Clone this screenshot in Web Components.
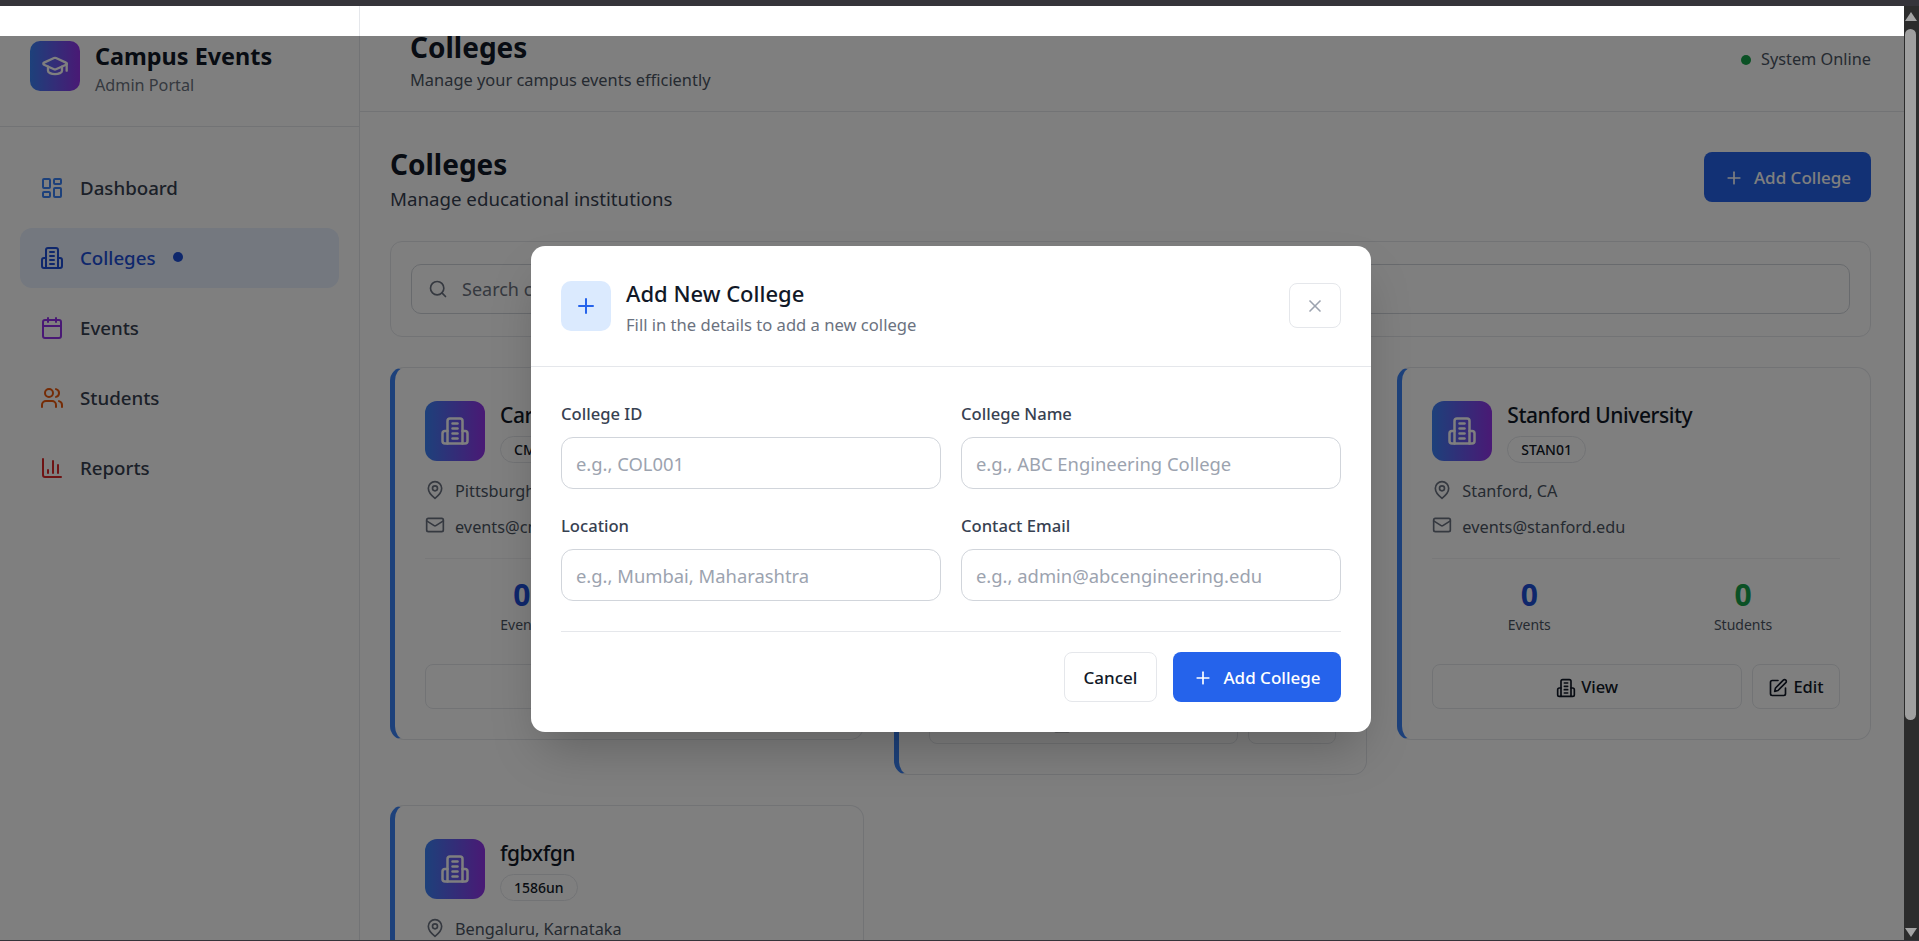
<!DOCTYPE html>
<html lang="en">
<head>
<meta charset="utf-8">
<title>Campus Events</title>
<style>
  html, body { margin: 0; height: 100%; overflow: hidden; }
  body { font-family: "Noto Sans", sans-serif; line-height: 1.6; color: #111827; background: #333; }
</style>
</head>
<body>
<app-shell>
  <side-bar slot="sidebar">
    <nav-item icon="dashboard" color="#3b82f6">Dashboard</nav-item>
    <nav-item icon="building" color="#1d4ed8" active>Colleges</nav-item>
    <nav-item icon="calendar" color="#9333ea">Events</nav-item>
    <nav-item icon="users" color="#ea580c">Students</nav-item>
    <nav-item icon="chart" color="#dc2626">Reports</nav-item>
  </side-bar>
  <top-bar slot="main"></top-bar>
  <colleges-page slot="main">
    <college-card name="Carnegie Mellon University" code="CMU" place="Pittsburgh, PA" email="events@cmu.edu"></college-card>
    <college-card name="Massachusetts Institute of Technology" code="MIT" place="Cambridge, MA" email="events@mit.edu"></college-card>
    <college-card name="Stanford University" code="STAN01" place="Stanford, CA" email="events@stanford.edu"></college-card>
    <college-card name="fgbxfgn" code="1586un" place="Bengaluru, Karnataka" email="admin@fgbxfgn.edu"></college-card>
  </colleges-page>
  <add-college-modal slot="modal"></add-college-modal>
</app-shell>

<script>
const ICONS = {
    dashboard: '<rect x="3" y="3" width="7" height="9" rx="1"/><rect x="14" y="3" width="7" height="5" rx="1"/><rect x="14" y="12" width="7" height="9" rx="1"/><rect x="3" y="16" width="7" height="5" rx="1"/>',
    building: '<path d="M6 22V4a2 2 0 0 1 2-2h8a2 2 0 0 1 2 2v18Z"/><path d="M6 12H4a2 2 0 0 0-2 2v6a2 2 0 0 0 2 2h2"/><path d="M18 12h2a2 2 0 0 1 2 2v6a2 2 0 0 1-2 2h-2"/><path d="M10 6h4"/><path d="M10 10h4"/><path d="M10 14h4"/><path d="M10 18h4"/>',
    calendar: '<path d="M8 2v4"/><path d="M16 2v4"/><rect x="3" y="4" width="18" height="18" rx="2"/><path d="M3 10h18"/>',
    users: '<path d="M16 21v-2a4 4 0 0 0-4-4H6a4 4 0 0 0-4 4v2"/><circle cx="9" cy="7" r="4"/><path d="M22 21v-2a4 4 0 0 0-3-3.87"/><path d="M16 3.13a4 4 0 0 1 0 7.75"/>',
    chart: '<path d="M3 3v16a2 2 0 0 0 2 2h16"/><path d="M18 17V9"/><path d="M13 17V5"/><path d="M8 17v-3"/>',
    cap: '<path d="M21.42 10.92a1 1 0 0 0-.02-1.84L12.83 5.18a2 2 0 0 0-1.66 0L2.6 9.08a1 1 0 0 0 0 1.83l8.57 3.91a2 2 0 0 0 1.66 0z"/><path d="M22 10v6"/><path d="M6 12.5V16a6 3 0 0 0 12 0v-3.5"/>',
    pin: '<path d="M20 10c0 6-8 12-8 12s-8-6-8-12a8 8 0 0 1 16 0Z"/><circle cx="12" cy="10" r="3"/>',
    mail: '<rect x="2" y="4" width="20" height="16" rx="2"/><path d="m22 7-8.97 5.7a1.94 1.94 0 0 1-2.06 0L2 7"/>',
    edit: '<path d="M12 3H5a2 2 0 0 0-2 2v14a2 2 0 0 0 2 2h14a2 2 0 0 0 2-2v-7"/><path d="M18.375 2.625a2.121 2.121 0 1 1 3 3L12 15l-4 1 1-4Z"/>',
    search: '<circle cx="11" cy="11" r="8"/><path d="m21 21-4.3-4.3"/>',
    plus: '<path d="M5 12h14"/><path d="M12 5v14"/>',
    close: '<path d="M18 6 6 18"/><path d="m6 6 12 12"/>'
};

class AppIcon extends HTMLElement {
    constructor(){
        super();
        this.attachShadow({mode: "open"});
    }
    connectedCallback(){
        const size = this.getAttribute('size') || 24;
        const stroke = this.getAttribute('stroke') || 2;
        this.shadowRoot.innerHTML = `
            <style>
                :host { display: inline-flex; flex: none; color: ${this.getAttribute('color') || 'currentColor'}; }
            </style>
            <svg width="${size}" height="${size}" viewBox="0 0 24 24" fill="none" stroke="currentColor"
                stroke-width="${stroke}" stroke-linecap="round" stroke-linejoin="round">${ICONS[this.getAttribute('name')]}</svg>
        `;
    }
}

class AppShell extends HTMLElement {
    constructor(){
        super();
        this.attachShadow({mode: "open"});
    }
    connectedCallback(){
        this.shadowRoot.innerHTML = `
            <style>
                :host { display: grid; grid-template-columns: minmax(0, 1fr) 15px; grid-template-rows: 6px minmax(0, 1fr) 1px; height: 941px; background: #35343a; }
                .bar { grid-column: 1 / 3; background: #35343a; }
                .view { position: relative; display: flex; overflow: hidden; background: #fff; }
                .main { flex: 1; min-width: 0; display: block; }
                .overlay { position: absolute; inset: 30px 0 0 0; padding: 1px 2px 0 0; background: rgba(0,0,0,.5); display: flex; align-items: center; justify-content: center; }
                .track { background: #2c2c2c; display: flex; flex-direction: column; align-items: center; padding: 6px 4px 3px 2px; box-sizing: border-box; }
                .up, .down { width: 0; height: 0; border: 6px solid transparent; border-top: 0; border-bottom: 9px solid #a3a3a3; flex: none; }
                .down { transform: rotate(180deg); margin-top: auto; }
                .thumb { width: 11px; height: 691px; margin-top: 8px; background: #9f9f9f; border-radius: 6px; flex: none; }
            </style>
            <div class="bar"></div>
            <div class="view">
                <slot name="sidebar"></slot>
                <div class="main"><slot name="main"></slot></div>
                <div class="overlay"><slot name="modal"></slot></div>
            </div>
            <div class="track"><div class="up"></div><div class="thumb"></div><div class="down"></div></div>
            <div class="bar"></div>
        `;
    }
}

class SideBar extends HTMLElement {
    constructor(){
        super();
        this.attachShadow({mode: "open"});
    }
    connectedCallback(){
        this.shadowRoot.innerHTML = `
            <style>
                :host { display: block; width: 360px; flex: none; box-sizing: border-box; border-right: 1px solid #e5e7eb; background: #fff; }
                header { display: flex; align-items: center; gap: 15px; height: 120px; padding: 0 30px; border-bottom: 1px solid #e5e7eb; }
                .logo { width: 50px; height: 50px; border-radius: 10px; background: linear-gradient(90deg, #3b82f6, #9333ea); display: flex; align-items: center; justify-content: center; color: #fff; }
                .text { margin-top: 8px; }
                h1 { margin: 0; font-size: 23.4px; font-weight: 700; line-height: 30px; color: #111827; }
                p { margin: 0; font-size: 16.2px; line-height: 29px; color: #6b7280; }
                nav { display: flex; flex-direction: column; gap: 10px; padding: 31px 20px; }
            </style>
            <header>
                <div class="logo"><app-icon name="cap" size="28"></app-icon></div>
                <div class="text"><h1>Campus Events</h1><p>Admin Portal</p></div>
            </header>
            <nav><slot></slot></nav>
        `;
    }
}

class NavItem extends HTMLElement {
    constructor(){
        super();
        this.attachShadow({mode: "open"});
    }
    connectedCallback(){
        const active = this.hasAttribute('active');
        this.shadowRoot.innerHTML = `
            <style>
                :host { display: flex; align-items: center; gap: 16px; height: 60px; padding: 0 20px; border-radius: 12px; font-size: 18.7px; font-weight: 500; color: #374151; }
                :host([active]) { background: #e8f0fe; color: #1d4ed8; }
                i { width: 10px; height: 10px; border-radius: 50%; background: #1d4ed8; margin: -2px 0 0 1px; }
            </style>
            <app-icon name="${this.getAttribute('icon')}" color="${this.getAttribute('color')}" size="24"></app-icon>
            <slot></slot>
            ${active ? '<i></i>' : ''}
        `;
    }
}

class TopBar extends HTMLElement {
    constructor(){
        super();
        this.attachShadow({mode: "open"});
    }
    connectedCallback(){
        this.shadowRoot.innerHTML = `
            <style>
                :host { display: flex; align-items: center; justify-content: space-between; height: 106px; box-sizing: border-box; padding: 0 33px 0 50px; border-bottom: 1px solid #e5e7eb; background: #fff; }
                .title { margin-top: 2px; }
                h2 { margin: 0; font-size: 28px; font-weight: 700; line-height: 40px; }
                p { margin: 0; font-size: 16.4px; line-height: 26px; color: #4b5563; }
                .status { display: flex; align-items: center; gap: 10px; margin-top: 2px; font-size: 16.3px; color: #4b5563; }
                i { width: 10px; height: 10px; border-radius: 50%; background: #16a34a; }
            </style>
            <div class="title"><h2>Colleges</h2><p>Manage your campus events efficiently</p></div>
            <div class="status"><i></i>System Online</div>
        `;
    }
}

class CollegesPage extends HTMLElement {
    constructor(){
        super();
        this.attachShadow({mode: "open"});
    }
    connectedCallback(){
        this.shadowRoot.innerHTML = `
            <style>
                :host { display: block; padding: 28px 33px 0 30px; background: #fff; }
                .head { display: flex; justify-content: space-between; align-items: flex-start; margin-bottom: 28px; }
                h2 { margin: 0; font-size: 28px; font-weight: 700; line-height: 48px; }
                p { margin: -4px 0 0; font-size: 18.7px; line-height: 29px; color: #374151; }
                ui-button { margin-top: 12px; }
                .search { border: 1px solid #e5e7eb; border-radius: 12px; padding: 22px 20px; margin-bottom: 30px; }
                .box { display: flex; align-items: center; gap: 14px; height: 50px; box-sizing: border-box; padding: 0 16px; border: 1px solid #d1d5db; border-radius: 10px; color: #6b7280; font-size: 18px; }
                .grid { display: grid; grid-template-columns: repeat(3, 1fr); gap: 30px; align-items: start; }
            </style>
            <div class="head">
                <div><h2>Colleges</h2><p>Manage educational institutions</p></div>
                <ui-button primary icon="plus" width="167px">Add College</ui-button>
            </div>
            <div class="search"><div class="box"><app-icon name="search" size="20" color="#6b7280"></app-icon>Search colleges</div></div>
            <div class="grid"><slot></slot></div>
        `;
    }
}

class CollegeCard extends HTMLElement {
    constructor(){
        super();
        this.attachShadow({mode: "open"});
    }
    connectedCallback(){
        const get = (name) => this.getAttribute(name);
        this.shadowRoot.innerHTML = `
            <style>
                :host { display: block; box-sizing: border-box; padding: 30px; background: #fff; border: 1px solid #e5e7eb; border-left: 5px solid #3b82f6; border-radius: 14px; }
                header { display: flex; align-items: center; gap: 15px; margin-bottom: 16px; }
                .logo { width: 60px; height: 60px; flex: none; border-radius: 12px; background: linear-gradient(90deg, #3b82f6, #9333ea); display: flex; align-items: center; justify-content: center; color: #fff; }
                h3 { margin: 0; font-size: 21px; font-weight: 500; line-height: 35px; letter-spacing: -.45px; color: #111827; }
                .code { display: block; width: max-content; height: 27px; box-sizing: border-box; line-height: 25px; margin-top: 3px; padding: 0 13px; border: 1px solid #e5e7eb; border-radius: 14px; font-size: 14px; font-weight: 500; color: #111827; }
                .rows { display: flex; flex-direction: column; gap: 10px; }
                .row { display: flex; align-items: center; gap: 10px; font-size: 16.3px; line-height: 25.6px; color: #4b5563; }
                .row app-icon { margin-top: -4px; color: #6b7280; }
                .stats { display: grid; grid-template-columns: 1fr 1fr; gap: 20px; margin-top: 18px; padding-top: 18px; border-top: 1px solid #f0f1f3; text-align: center; }
                b { display: block; font-size: 30px; font-weight: 700; line-height: 36px; }
                span.label { display: block; font-size: 14px; line-height: 24px; color: #4b5563; }
                .actions { display: flex; gap: 10px; margin-top: 27px; }
                .actions ui-button:first-child { flex: 1; }
            </style>
            <header>
                <div class="logo"><app-icon name="building" size="30"></app-icon></div>
                <div><h3>${get('name')}</h3><span class="code">${get('code')}</span></div>
            </header>
            <div class="rows">
                <div class="row"><app-icon name="pin" size="20"></app-icon>${get('place')}</div>
                <div class="row"><app-icon name="mail" size="20"></app-icon>${get('email')}</div>
            </div>
            <div class="stats">
                <div><b style="color:#1d4ed8">0</b><span class="label">Events</span></div>
                <div><b style="color:#16a34a">0</b><span class="label">Students</span></div>
            </div>
            <div class="actions">
                <ui-button icon="building" small>View</ui-button>
                <ui-button icon="edit" small width="88px">Edit</ui-button>
            </div>
        `;
    }
}

class UiButton extends HTMLElement {
    constructor(){
        super();
        this.attachShadow({mode: "open"});
    }
    connectedCallback(){
        const small = this.hasAttribute('small');
        const primary = this.hasAttribute('primary');
        const icon = this.getAttribute('icon');
        this.shadowRoot.innerHTML = `
            <style>
                :host { display: inline-flex; align-items: center; justify-content: center; gap: ${small ? 5 : 10}px; box-sizing: border-box;
                    height: ${small ? 45 : 50}px; width: ${this.getAttribute('width') || 'auto'}; flex: none; padding-top: 2px;
                    border-radius: 8px; font-size: ${small ? 16.5 : 17}px; font-weight: 500;
                    background: ${primary ? '#2563eb' : '#fff'}; color: ${primary ? '#fff' : '#111827'};
                    border: ${primary ? '0' : '1px solid #e5e7eb'}; }
            </style>
            ${icon ? `<app-icon name="${icon}" size="20"></app-icon>` : ''}
            <slot></slot>
        `;
    }
}

class FormField extends HTMLElement {
    constructor(){
        super();
        this.attachShadow({mode: "open"});
    }
    connectedCallback(){
        this.shadowRoot.innerHTML = `
            <style>
                :host { display: block; }
                label { display: block; font-size: 16.6px; font-weight: 500; line-height: 24px; margin-bottom: 11px; color: #374151; }
                input { display: block; width: 100%; height: 52px; box-sizing: border-box; padding: 1px 14px 0; border: 1px solid #d1d5db; border-radius: 12px; font: 400 18.4px "Noto Sans", sans-serif; color: #111827; outline: none; background: #fff; }
                input::placeholder { color: #9ca3af; opacity: 1; }
            </style>
            <label>${this.getAttribute('label')}</label>
            <input type="text" placeholder="${this.getAttribute('placeholder')}">
        `;
    }
}

class AddCollegeModal extends HTMLElement {
    constructor(){
        super();
        this.attachShadow({mode: "open"});
    }
    connectedCallback(){
        this.shadowRoot.innerHTML = `
            <style>
                :host { display: block; width: 840px; background: #fff; border-radius: 14px; box-shadow: 0 25px 50px -12px rgba(0,0,0,.25); }
                header { display: flex; align-items: center; gap: 15px; padding: 35px 30px; border-bottom: 1px solid #e5e7eb; }
                .plus { width: 50px; height: 50px; border-radius: 10px; background: #dbeafe; color: #2563eb; display: flex; align-items: center; justify-content: center; }
                h2 { margin: -2px 0 2px; font-size: 22px; font-weight: 500; line-height: 30px; color: #111827; }
                p { margin: 0; font-size: 16.6px; line-height: 30px; color: #6b7280; }
                .text { flex: 1; height: 50px; margin-top: -2px; }
                .close { width: 52px; height: 45px; box-sizing: border-box; border: 1px solid #e5e7eb; border-radius: 8px; color: #9ca3af; display: flex; align-items: center; justify-content: center; }
                form { display: block; padding: 35px 30px 30px; }
                .fields { display: grid; grid-template-columns: 1fr 1fr; gap: 25px 20px; }
                .foot { display: flex; justify-content: flex-end; gap: 16px; margin-top: 30px; padding-top: 20px; border-top: 1px solid #e5e7eb; }
            </style>
            <header>
                <div class="plus"><app-icon name="plus" size="24"></app-icon></div>
                <div class="text"><h2>Add New College</h2><p>Fill in the details to add a new college</p></div>
                <div class="close"><app-icon name="close" size="20"></app-icon></div>
            </header>
            <form>
                <div class="fields">
                    <form-field label="College ID" placeholder="e.g., COL001"></form-field>
                    <form-field label="College Name" placeholder="e.g., ABC Engineering College"></form-field>
                    <form-field label="Location" placeholder="e.g., Mumbai, Maharashtra"></form-field>
                    <form-field label="Contact Email" placeholder="e.g., admin@abcengineering.edu"></form-field>
                </div>
                <div class="foot">
                    <ui-button width="93px">Cancel</ui-button>
                    <ui-button primary icon="plus" width="168px">Add College</ui-button>
                </div>
            </form>
        `;
    }
}

customElements.define('app-icon', AppIcon);
customElements.define('app-shell', AppShell);
customElements.define('side-bar', SideBar);
customElements.define('nav-item', NavItem);
customElements.define('top-bar', TopBar);
customElements.define('colleges-page', CollegesPage);
customElements.define('college-card', CollegeCard);
customElements.define('ui-button', UiButton);
customElements.define('form-field', FormField);
customElements.define('add-college-modal', AddCollegeModal);
</script>
</body>
</html>
